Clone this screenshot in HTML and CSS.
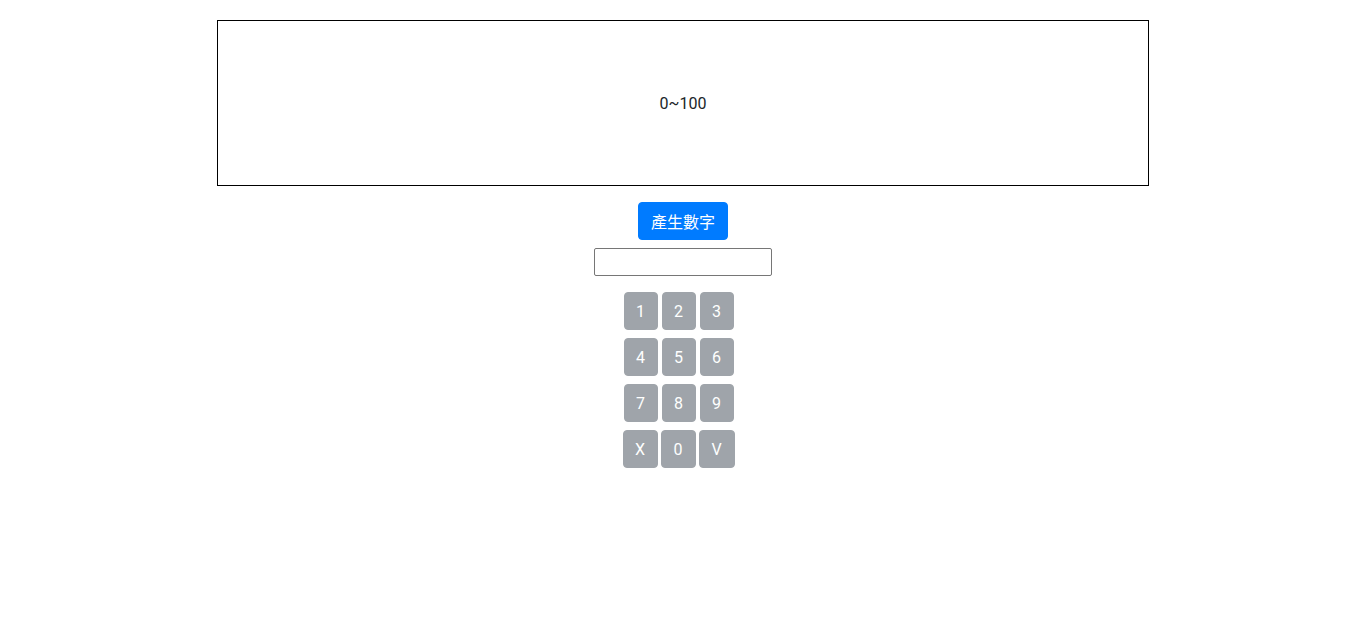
FILE: index.html
```html
<!DOCTYPE html>
<html lang="zh-Hant">
<head>
<meta charset="utf-8">
<title>猜數字</title>
<link rel="stylesheet" href="styles.css">
</head>
<body>
<div class="page">
  <div class="display">0~100</div>
  <button class="btn btn-primary">產生數字</button>
  <input class="guess" type="text">
  <div class="keypad">
    <div class="key-row">
      <button class="btn key" disabled>1</button>
      <button class="btn key" disabled>2</button>
      <button class="btn key" disabled>3</button>
    </div>
    <div class="key-row">
      <button class="btn key" disabled>4</button>
      <button class="btn key" disabled>5</button>
      <button class="btn key" disabled>6</button>
    </div>
    <div class="key-row">
      <button class="btn key" disabled>7</button>
      <button class="btn key" disabled>8</button>
      <button class="btn key" disabled>9</button>
    </div>
    <div class="key-row key-row-last">
      <button class="btn key key-wide" disabled>X</button>
      <button class="btn key key-wide" disabled>0</button>
      <button class="btn key key-wider" disabled>V</button>
    </div>
  </div>
</div>
</body>
</html>
```

FILE: styles.css
```css
* {
  box-sizing: border-box;
}

body {
  margin: 0;
  background: #fff;
  color: #212529;
  font-family: Roboto, "Noto Sans", "Noto Sans CJK TC", sans-serif;
  font-size: 16px;
  line-height: 1.5;
}

.page {
  display: flex;
  flex-direction: column;
  align-items: center;
  padding-top: 20px;
}

.display {
  width: 932px;
  height: 166px;
  border: 1px solid #000;
  display: flex;
  align-items: center;
  justify-content: center;
  padding-top: 2px;
  margin-bottom: 16px;
}

.btn {
  font-family: Roboto, "Noto Sans CJK TC", sans-serif;
  font-size: 16px;
  line-height: 24px;
  padding: 6px 12px;
  border: 1px solid transparent;
  border-radius: 4px;
  color: #fff;
  cursor: pointer;
}

.btn-primary {
  background: #007bff;
  border-color: #007bff;
  width: 90px;
  height: 38px;
  padding: 8px 0 4px;
  margin-bottom: 8px;
}

.guess {
  width: 178px;
  height: 28px;
  border: 1px solid #767676;
  border-radius: 2px;
  padding: 1px 2px;
  font-size: 13px;
  margin: 0 0 16px;
}

.keypad {
  display: flex;
  flex-direction: column;
  align-items: center;
  gap: 8px;
  margin-right: 9px;
}

.key-row {
  display: flex;
  gap: 4px;
}

.key-row-last {
  gap: 3px;
}

.key {
  width: 34px;
  height: 38px;
  padding: 7px 0 5px;
  background: #6c757d;
  border-color: #6c757d;
  opacity: 0.65;
  text-align: center;
}

.key:disabled {
  color: #fff;
  cursor: default;
}

.key-wide {
  width: 35px;
}

.key-wider {
  width: 36px;
}
```
